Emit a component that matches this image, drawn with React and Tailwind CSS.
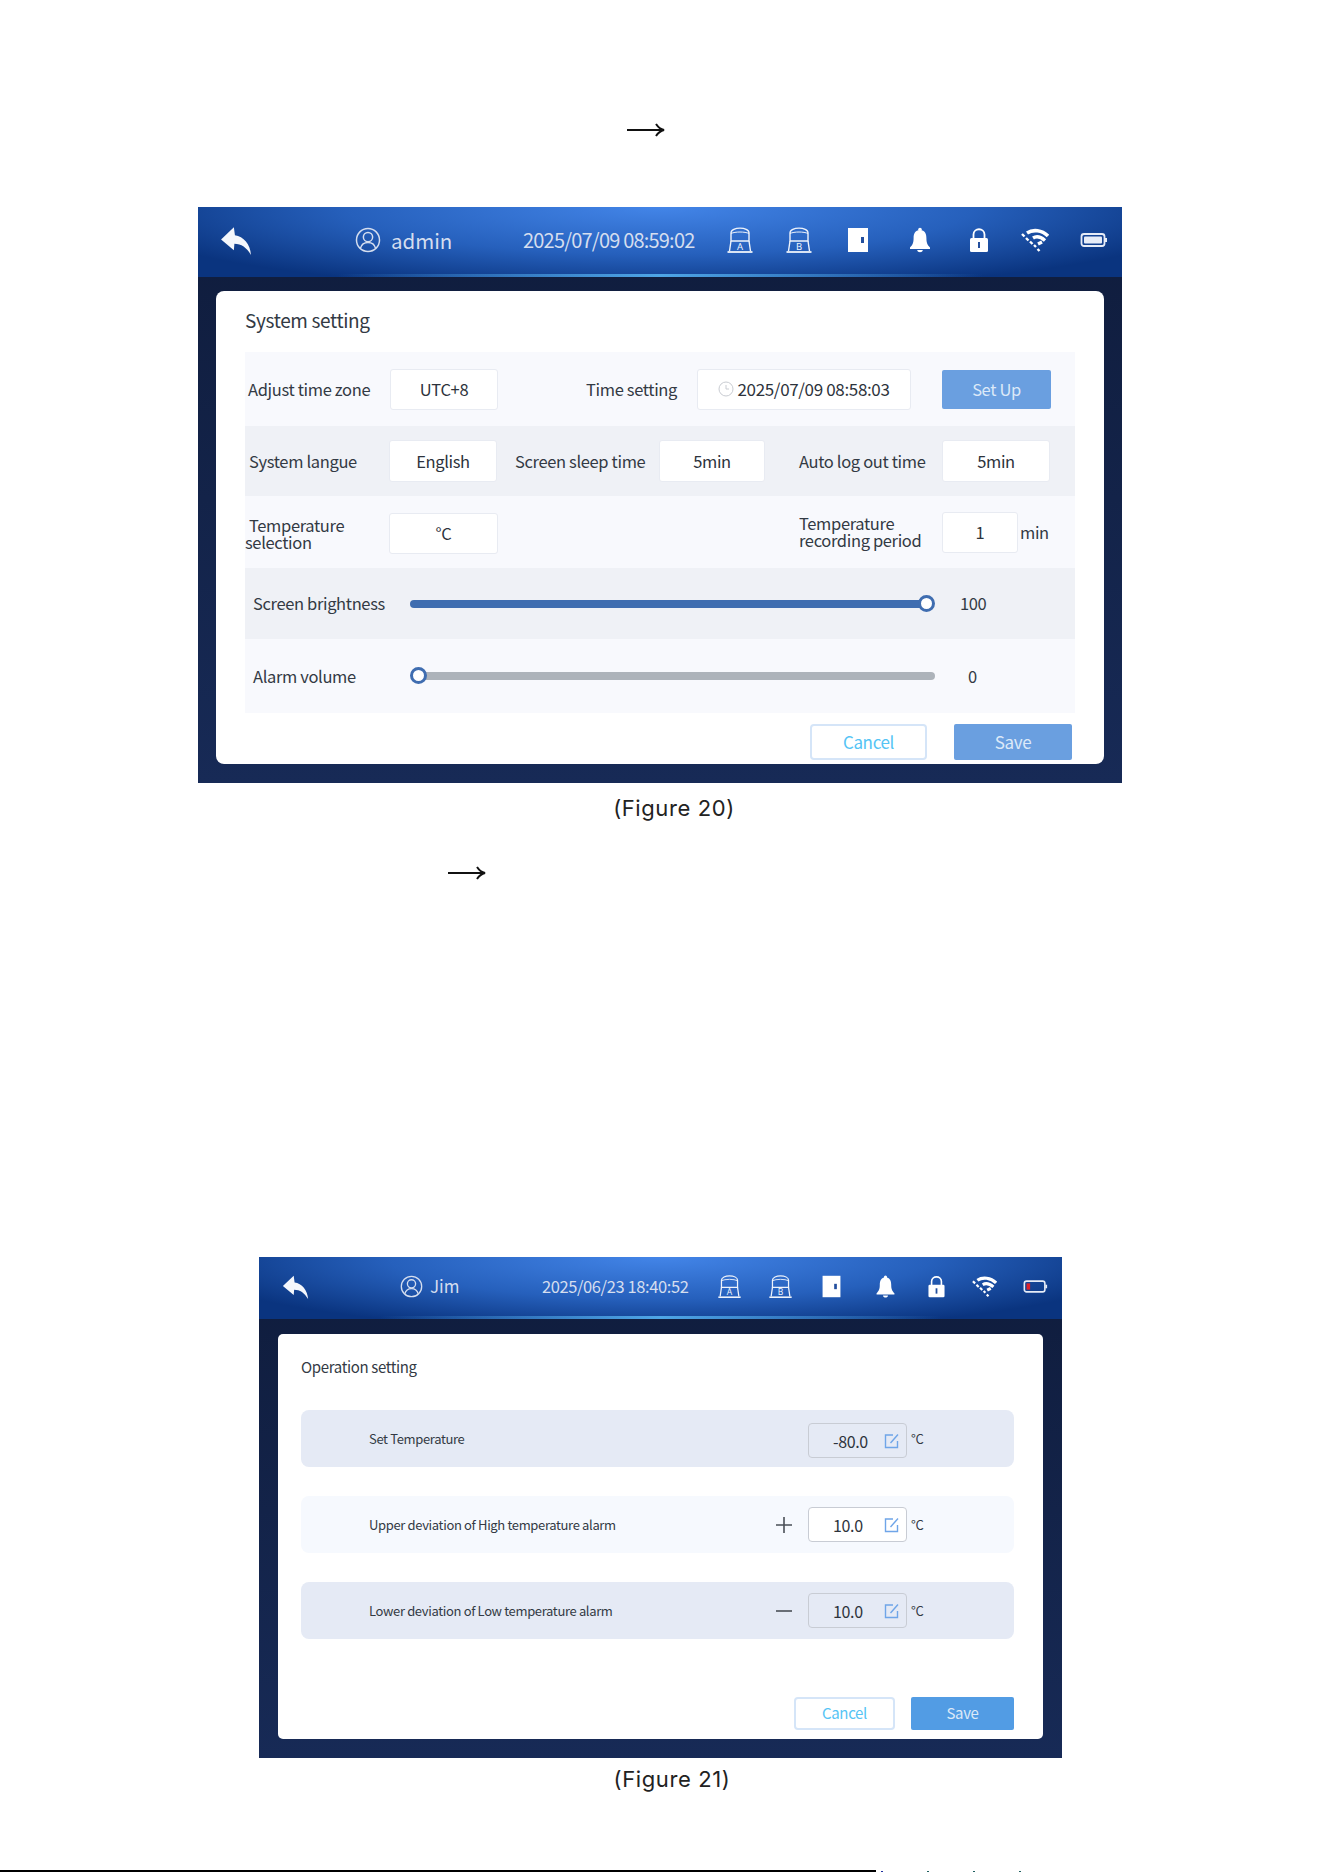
const cjk = { fontFamily: '"Noto Sans CJK SC", "Noto Sans", sans-serif' };

function BackIcon({ size }) {
  return (
    <svg width={size} height={size} viewBox="0 0 30 30" fill="#f4f7fc">
      <path d="M13 3 L1 14.5 L13 24.5 L13.5 18.5 C20 18.5 25 22 29 29 C28.5 19 22 11.5 14 10.5 Z" />
    </svg>
  );
}

function UserIcon({ size }) {
  return (
    <svg width={size} height={size} viewBox="0 0 28 28" fill="none" stroke="#d5deef" strokeWidth="1.6">
      <circle cx="14" cy="14" r="12.4" />
      <circle cx="14" cy="10.8" r="5" />
      <path d="M5.8 23 C7 18.6 10 16.6 14 16.6 C18 16.6 21 18.6 22.2 23" />
    </svg>
  );
}

function CompressorIcon({ size, letter }) {
  return (
    <svg width={size} height={size} viewBox="0 0 28 28" fill="none" stroke="#eef3fb" strokeWidth="1.4">
      <path d="M5 15 L5 7 C5 0.5 23 0.5 23 7 L23 15 Z" />
      <path d="M5 7.5 C9 5.5 19 5.5 23 7.5" strokeWidth="1" />
      <path d="M5 15 L3.5 25 M23 15 L24.5 25" />
      <path d="M1.5 26 L26.5 26" strokeWidth="1.8" />
      <text x="14" y="24" textAnchor="middle" fontSize="9.5" fill="#eef3fb" stroke="none" fontFamily="Noto Sans">{letter}</text>
    </svg>
  );
}

function DoorIcon({ size }) {
  return (
    <svg width={size} height={size} viewBox="0 0 28 28">
      <rect x="4" y="2" width="20" height="24" fill="#ffffff" />
      <rect x="17" y="11" width="3" height="6" fill="#234f9e" />
    </svg>
  );
}

function BellIcon({ size }) {
  return (
    <svg width={size} height={size} viewBox="0 0 28 28" fill="#ffffff">
      <circle cx="14" cy="3.6" r="1.8" />
      <path d="M14 4 C9 4 7.6 8 7.6 12 C7.6 17 6.5 19 4 21.5 L4 23 L24 23 L24 21.5 C21.5 19 20.4 17 20.4 12 C20.4 8 19 4 14 4 Z" />
      <path d="M11.2 24 L16.8 24 C16.6 27 11.4 27 11.2 24 Z" />
    </svg>
  );
}

function LockIcon({ size }) {
  return (
    <svg width={size} height={size} viewBox="0 0 28 28">
      <path d="M8.5 13 L8.5 8.5 C8.5 1.5 19.5 1.5 19.5 8.5 L19.5 13" fill="none" stroke="#ffffff" strokeWidth="1.8" />
      <rect x="5" y="12" width="18" height="14" rx="1.5" fill="#ffffff" />
      <rect x="13" y="16" width="2" height="6" fill="#234f9e" />
    </svg>
  );
}

function WifiIcon({ size }) {
  return (
    <svg width={size} height={size} viewBox="0 0 28 28" fill="none" stroke="#ffffff">
      <path d="M6 7 C12 3 21 4 27 10" strokeWidth="3.6" />
      <path d="M12 12 C16 9.5 20 11 24 14.5" strokeWidth="3.4" />
      <path d="M17 18 L21 16" strokeWidth="3.4" />
      <path d="M1 8 L3.5 10.5 M5 12 L7.5 14.5 M9 15.5 L11.5 18 M13 19 L15 21 M16.5 23 L18.5 25" strokeWidth="2.4" />
    </svg>
  );
}

function BatteryIcon({ size, low }) {
  return (
    <svg width={size} height={size} viewBox="0 0 28 28" fill="none">
      <rect x="1.5" y="8" width="23" height="12" rx="2.5" stroke="#e6ecf7" strokeWidth="1.8" />
      <rect x="25" y="12" width="2" height="4" fill="#e6ecf7" />
      {low ? <rect x="4" y="10.5" width="4" height="7" fill="#e0202a" /> : <rect x="4" y="10.5" width="18" height="7" rx="1" fill="#e6ecf7" />}
    </svg>
  );
}

function Arrow() {
  return (
    <svg width="38" height="16" viewBox="0 0 38 16" fill="none" stroke="#111111">
      <path d="M0 8 L35 8" strokeWidth="2" />
      <path d="M29 2 C31 5 33 7 37 8 C33 9 31 11 29 14" strokeWidth="2" />
    </svg>
  );
}

function Header({ big, user, date, low }) {
  const size = big ? 28 : 25;
  return (
    <div className={`relative flex items-center shrink-0 pb-[4px] bg-[radial-gradient(ellipse_at_50%_0%,#4385e8_0%,#2660bc_48%,#0a347f_86%)] ${big ? 'h-[70px] pl-[22px]' : 'h-[62px] pl-[23px]'}`}>
      <BackIcon size={big ? 32 : 27} />
      {big ? (
        <>
          <div className="ml-[103px]"><UserIcon size={26} /></div>
          <span className="ml-[10px] w-[62px] text-[20.5px] text-[#d5deef]">{user}</span>
          <span className="ml-[70px] w-[172px] text-[20px] tracking-[-0.8px] text-[#d5deef] whitespace-nowrap">{date}</span>
        </>
      ) : (
        <>
          <div className="ml-[91px]"><UserIcon size={23} /></div>
          <span className="ml-[7px] w-[40px] text-[17px] text-[#d5deef]">{user}</span>
          <span className="ml-[72px] w-[150px] text-[16.5px] tracking-[-0.4px] text-[#d5deef] whitespace-nowrap">{date}</span>
        </>
      )}
      <div className={`flex items-center ${big ? 'ml-[31px] gap-[31px]' : 'ml-[25px] gap-[26px]'}`}>
        <CompressorIcon size={size} letter="A" />
        <CompressorIcon size={size} letter="B" />
        <DoorIcon size={size} />
        <div className="ml-[3px] -mr-[3px]"><BellIcon size={size} /></div>
        <div className="ml-[3px] -mr-[3px]"><LockIcon size={size} /></div>
        <WifiIcon size={size} />
        <BatteryIcon size={size} low={low} />
      </div>
      <div className="absolute left-[15%] right-[15%] bottom-0 h-[3px] bg-[linear-gradient(90deg,transparent,#4fa6e6,transparent)]" />
    </div>
  );
}

function Box({ className, children }) {
  return (
    <div className={`flex items-center justify-center bg-white rounded-[3px] border border-[#e8ebf2] text-[#2d333c] ${className}`}>
      {children}
    </div>
  );
}

function Slider({ percent }) {
  const full = percent > 0;
  return (
    <div className="relative w-[525px] h-[8px]">
      <div className={`h-full rounded-full ${full ? 'bg-[#3f6db0] mr-[8px]' : 'bg-[#adb3ba] ml-[8px]'}`} />
      <div className={`absolute top-[-5px] w-[17px] h-[17px] rounded-full bg-white border-[3px] border-[#3f6db0] ${full ? 'right-0' : 'left-0'}`} />
    </div>
  );
}

function SystemSetting() {
  return (
    <div className="w-[924px] h-[576px] ml-[198px] flex flex-col bg-linear-to-b from-[#0f1c3c] to-[#172a56]" style={cjk}>
      <Header big user="admin" date="2025/07/09 08:59:02" />
      <div className="mx-[18px] mt-[14px] h-[473px] bg-white rounded-[8px] px-[29px] flex flex-col text-[16.5px] tracking-[-0.35px] text-[#333a44]">
        <div className="h-[61px] pt-[15px] text-[19px] leading-[28px]">System setting</div>

        <div className="h-[74px] bg-[#f8f9fd] flex items-center pl-[3px]">
          <span className="w-[142px] whitespace-nowrap">Adjust time zone</span>
          <Box className="w-[108px] h-[41px]">UTC+8</Box>
          <span className="ml-[88px] w-[111px] whitespace-nowrap">Time setting</span>
          <Box className="w-[214px] h-[41px] gap-[3px] text-[17px]">
            <svg width="16" height="16" viewBox="0 0 16 16" fill="none" stroke="#c9ccd2"><circle cx="8" cy="8" r="7" /><path d="M8 4 L8 8 L11 8" /></svg>
            2025/07/09 08:58:03
          </Box>
          <div className="ml-[31px] w-[109px] h-[39px] flex items-center justify-center rounded-[2px] bg-[#6a9fe0] text-[#dce9f8]">Set Up</div>
        </div>

        <div className="h-[70px] bg-[#eff1f6] flex items-center pl-[4px]">
          <span className="w-[140px] whitespace-nowrap">System langue</span>
          <Box className="w-[108px] h-[42px]">English</Box>
          <span className="ml-[18px] w-[144px] whitespace-nowrap">Screen sleep time</span>
          <Box className="w-[106px] h-[42px]">5min</Box>
          <span className="ml-[34px] w-[143px] whitespace-nowrap">Auto log out time</span>
          <Box className="w-[108px] h-[42px]">5min</Box>
        </div>

        <div className="h-[72px] bg-[#f8f9fd] flex items-center">
          <div className="w-[144px] leading-[17px] mt-[3px]"><div className="pl-[4px]">Temperature</div><div>selection</div></div>
          <Box className="w-[109px] h-[41px] mt-[2px]">°C</Box>
          <div className="ml-[301px] w-[143px] leading-[17px] whitespace-nowrap"><div>Temperature</div><div>recording period</div></div>
          <Box className="w-[76px] h-[41px] mt-[1px]">1</Box>
          <span className="ml-[2px]">min</span>
        </div>

        <div className="h-[71px] bg-[#eff1f6] flex items-center pl-[8px]">
          <span className="w-[157px] whitespace-nowrap">Screen brightness</span>
          <Slider percent={100} />
          <span className="ml-[25px]">100</span>
        </div>

        <div className="h-[74px] bg-[#f8f9fd] flex items-center pl-[8px]">
          <span className="w-[157px]">Alarm volume</span>
          <Slider percent={0} />
          <span className="ml-[33px]">0</span>
        </div>

        <div className="flex justify-end gap-[27px] mt-[11px] pr-[3px]">
          <div className="w-[117px] h-[36px] flex items-center justify-center rounded-[4px] border-2 border-[#d5e5f8] text-[#55c4f5] text-[17px]">Cancel</div>
          <div className="w-[118px] h-[36px] flex items-center justify-center rounded-[2px] bg-[#6a9fe0] text-[#dce9f8] text-[17px]">Save</div>
        </div>
      </div>
    </div>
  );
}

function ValueRow({ label, value, sign, dark }) {
  return (
    <div className={`h-[57px] rounded-[8px] flex items-center pl-[68px] ${dark ? 'bg-[#e5eaf5]' : 'bg-[#f6f9fe]'}`}>
      <span className="w-[402px] whitespace-nowrap">{label}</span>
      <div className="w-[37px] flex items-center justify-start pl-[3px]">
        {sign === 'plus' && <svg width="20" height="20" viewBox="0 0 20 20" stroke="#4a4f57" strokeWidth="1.6"><path d="M10 2 L10 18 M2 10 L18 10" /></svg>}
        {sign === 'minus' && <svg width="20" height="20" viewBox="0 0 20 20" stroke="#4a4f57" strokeWidth="1.6"><path d="M2 10 L18 10" /></svg>}
      </div>
      <div className={`w-[99px] h-[35px] flex items-center rounded-[4px] border border-[#c8ccd4] text-[16px] text-[#2d333c] ${dark ? '' : 'bg-white'} ${sign ? '' : 'mt-[4px]'}`}>
        <span className="w-[75px] pl-[24px]">{value}</span>
        <svg width="16" height="16" viewBox="0 0 16 16" fill="none" stroke="#6fa5e8" strokeWidth="1.4">
          <path d="M13.5 8 L13.5 14.5 L1.5 14.5 L1.5 2 L9 2" />
          <path d="M6.5 10 L14 1.5" />
        </svg>
      </div>
      <span className="ml-[4px] text-[13px]">°C</span>
    </div>
  );
}

function OperationSetting() {
  return (
    <div className="w-[803px] h-[501px] ml-[259px] flex flex-col bg-linear-to-b from-[#0f1c3c] to-[#172a56]" style={cjk}>
      <Header user="Jim" date="2025/06/23 18:40:52" low />
      <div className="mx-[19px] mt-[15px] h-[405px] bg-white rounded-[5px] pl-[23px] pr-[29px] flex flex-col text-[13px] tracking-[-0.35px] text-[#333a44]">
        <div className="h-[76px] pt-[21px] text-[15px] leading-[24px]">Operation setting</div>
        <div className="flex flex-col gap-[29px]">
          <ValueRow label="Set Temperature" value="-80.0" dark />
          <ValueRow label="Upper deviation of High temperature alarm" value="10.0" sign="plus" />
          <ValueRow label="Lower deviation of Low temperature alarm" value="10.0" sign="minus" dark />
        </div>
        <div className="flex justify-end gap-[16px] mt-[58px]">
          <div className="w-[101px] h-[33px] flex items-center justify-center rounded-[4px] border-2 border-[#d5e5f8] text-[#55c4f5] text-[15px]">Cancel</div>
          <div className="w-[103px] h-[33px] flex items-center justify-center rounded-[2px] bg-[#529ce4] text-[#dce9f8] text-[15px]">Save</div>
        </div>
      </div>
    </div>
  );
}

function Caption({ children, className }) {
  return (
    <div className={`text-center text-[22px] tracking-[0.6px] leading-[28px] text-[#222222] ${className}`} style={{ fontFamily: 'Inter, sans-serif' }}>
      {children}
    </div>
  );
}

export default function App() {
  return (
    <div className="relative w-[1324px] h-[1872px] overflow-hidden bg-white">
      <div className="pt-[122px] pl-[627px] h-[207px]"><Arrow /></div>
      <SystemSetting />
      <Caption className="mt-[11px] w-[1348px]">(Figure 20)</Caption>
      <div className="mt-[43px] pl-[448px] h-[16px]"><Arrow /></div>
      <div className="h-[376px]" />
      <OperationSetting />
      <Caption className="mt-[7px] w-[1344px]">(Figure 21)</Caption>
      <div className="absolute left-0 bottom-0 w-[876px] h-[2px] bg-black" />
      <div className="absolute left-[881px] bottom-0 flex gap-[44px]">
        <span className="w-[2px] h-[1px] bg-[#2030a0]" />
        <span className="w-[2px] h-[1px] bg-[#206060]" />
        <span className="w-[2px] h-[1px] bg-[#206060]" />
        <span className="w-[2px] h-[1px] bg-[#206060]" />
      </div>
    </div>
  );
}
